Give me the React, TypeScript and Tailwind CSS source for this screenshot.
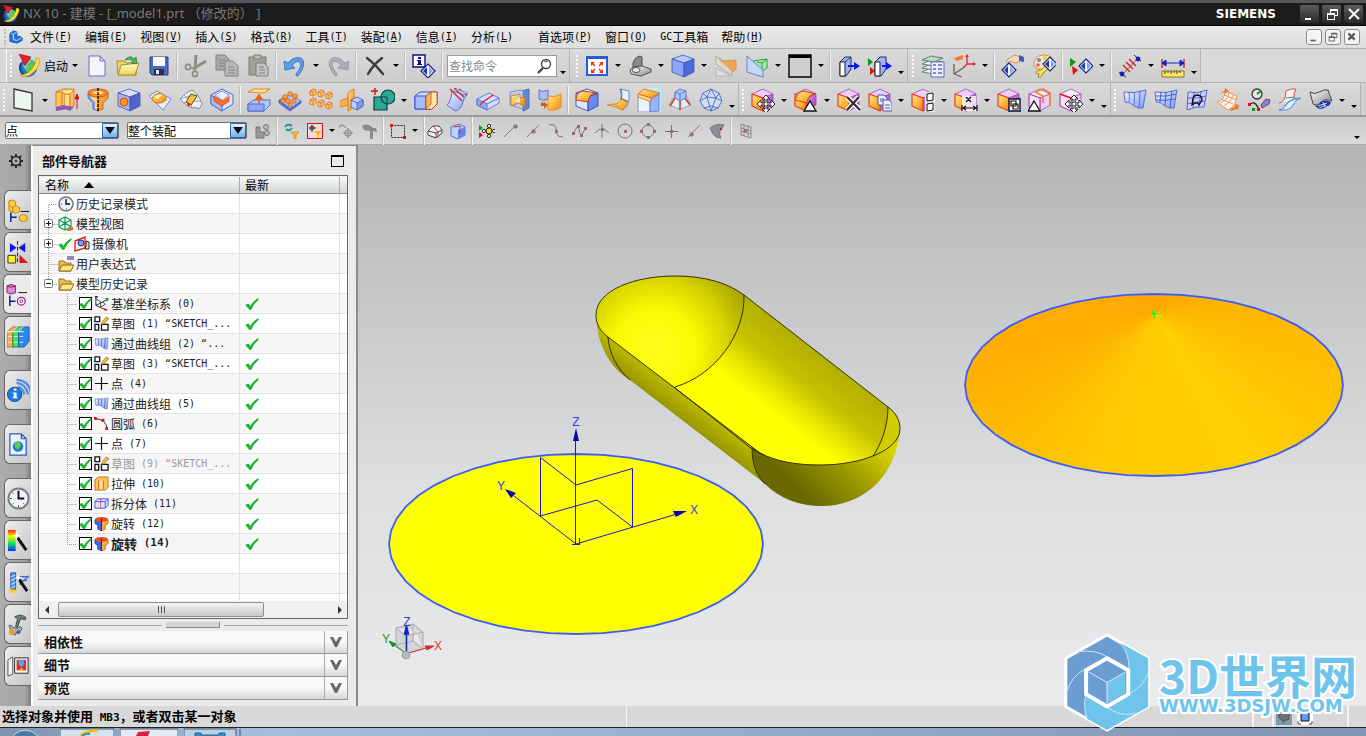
import React, { useState } from 'react';
import clsx from 'clsx';

type Art = Record<string, React.ReactNode>;

/* ---------- shared drawing pieces ---------- */

const Gradients = () => (
  <svg className="absolute h-0 w-0" aria-hidden="true">
    <defs>
      <linearGradient id="blue" x1="0" y1="0" x2="1" y2="1">
        <stop offset="0" stopColor="#f4f7ff" />
        <stop offset="1" stopColor="#7e9af4" />
      </linearGradient>
      <linearGradient id="orange" x1="0" y1="0" x2="1" y2="1">
        <stop offset="0" stopColor="#ffec9a" />
        <stop offset="0.6" stopColor="#ffb030" />
        <stop offset="1" stopColor="#f58418" />
      </linearGradient>
      <linearGradient id="yellow" x1="0" y1="0" x2="0" y2="1">
        <stop offset="0" stopColor="#fffbd0" />
        <stop offset="1" stopColor="#f2d35a" />
      </linearGradient>
      <linearGradient id="purple" x1="0" y1="0" x2="1" y2="1">
        <stop offset="0" stopColor="#d99aee" />
        <stop offset="1" stopColor="#9a34b8" />
      </linearGradient>
      <linearGradient id="gray" x1="0" y1="0" x2="1" y2="1">
        <stop offset="0" stopColor="#fafafa" />
        <stop offset="1" stopColor="#8b8b8b" />
      </linearGradient>
      <linearGradient id="rainbow" x1="0" y1="0" x2="0" y2="1">
        <stop offset="0" stopColor="#ff2200" />
        <stop offset="0.3" stopColor="#ffee00" />
        <stop offset="0.6" stopColor="#22ee44" />
        <stop offset="1" stopColor="#0033ff" />
      </linearGradient>
    </defs>
  </svg>
);

const Cube = ({ top, left, right, stroke }: { top: string; left: string; right: string; stroke: string }) => (
  <g stroke={stroke} strokeWidth=".8" strokeLinejoin="round">
    <path d="M1 5L12 1l11 4-10 4z" fill={top} />
    <path d="M1 5l12 4v14L1 18z" fill={left} />
    <path d="M13 9l10-4v13l-10 5z" fill={right} />
  </g>
);

const SyncCube = ({ faded }: { faded?: boolean }) => (
  <g strokeLinejoin="round" strokeWidth=".8">
    <path d="M1 6L12 1l10 5-10 4z" fill={faded ? '#fbeefc' : '#efcdf8'} stroke="#9a4ab4" />
    <path d="M12 10l10-4v11l-10 6z" fill={faded ? '#ecd0f4' : 'url(#purple)'} stroke="#9a4ab4" />
    <path d="M1 6l11 4v13L1 18z" fill={faded ? '#f8e0f6' : 'url(#orange)'} stroke={faded ? '#a050b8' : '#f03a10'} strokeWidth="1.2" />
  </g>
);

const MoveCross = () => (
  <path
    d="M15 7l4 4h-3v4h4v-3l4 4-4 4v-3h-4v4h3l-4 4-4-4h3v-4h-4v3l-4-4 4-4v3h4v-4h-3z"
    fill="#fff"
    stroke="#222"
    strokeWidth="1"
  />
);

const Diamond = ({ x, y }: { x: number; y: number }) => (
  <g transform={`translate(${x} ${y})`}>
    <path d="M0-7l7 7-7 7-7-7z" fill="#f2f5ff" stroke="#1a2280" strokeWidth="1.2" />
    <path d="M-1-4v8l-4-4z" fill="#1a35b4" />
    <path d="M1-4l4 4-4 4z" fill="#8aa4f4" />
  </g>
);

const Triangle2 = () => (
  <>
    <path d="M1 4l6 4-6 5z" fill="#0a9a1a" />
    <path d="M3 12l6 4-5 5z" fill="#dd1111" />
  </>
);

const LogoArt = () => (
  <>
    <circle cx="11" cy="14" r="9" fill="#1878d0" />
    <path d="M9 6q7-1 9 4 1 5-4 8-6 1-7-5z" fill="#58c860" />
    <path d="M4 9q-3 8 4 13" fill="none" stroke="#12409c" strokeWidth="2" />
    <path d="M6 12q2-5 8-6-4 3-5 8z" fill="#a8e4f0" />
    <path d="M19 4q4 0 4 3-2 9-10 14-7 3-10 0 7 0 12-6 4-5 4-11z" fill="#ffdc3c" stroke="#c08a08" strokeWidth=".6" />
    <path d="M2 0l12 3-6 9z" fill="#e3202a" stroke="#a01018" strokeWidth=".6" />
  </>
);

/* ---------- 24px toolbar drawings ---------- */

const art: Art = {
  logo: <LogoArt />,
  new: <path d="M4 2h11l5 5v15H4zM15 2v5h5" fill="#f3f5ff" stroke="#6a6fd0" />,
  open: (
    <>
      <path d="M1 7h7l2 2h10v12H2z" fill="#ecd468" stroke="#a8922a" />
      <path d="M5 11l18-2-4 12H2z" fill="url(#yellow)" stroke="#a8922a" />
      <path d="M9 6q5-6 9-1l2-2 1 7-6-1 2-2q-3-3-8-1z" fill="#4ab45a" stroke="#1a6a28" strokeWidth=".6" />
    </>
  ),
  save: (
    <>
      <path d="M3 3h18v18H5l-2-2z" fill="#4a6ac8" stroke="#2c3c76" />
      <path d="M6 3h12v9H6z" fill="#f8fafd" />
      <path d="M7 15h10v6H7z" fill="#2a2f3c" />
      <path d="M9 16h3v4H9z" fill="#e8e8e8" />
    </>
  ),
  cut: (
    <g stroke="#8e8e84" fill="none" strokeWidth="1.6">
      <path d="M12 1l-1 14M22 7L9 15" strokeWidth="3" />
      <circle cx="4" cy="13" r="2.6" />
      <circle cx="11" cy="20" r="2.6" />
      <path d="M6 14l5 1v3" />
    </g>
  ),
  copy: (
    <g fill="#a9a9a9" stroke="#828282">
      <path d="M1 1h9l4 4v11H1z" />
      <path d="M10 7h8l5 5v10H10z" fill="#b8b8b8" />
      <path d="M4 6h6M4 9h5M4 12h5M13 13h6M13 16h7M13 19h7" />
    </g>
  ),
  paste: (
    <g fill="#a2a298" stroke="#7e7e7a">
      <path d="M3 3h17v18H3z" />
      <path d="M8 1h7v4H8z" fill="#bbb" />
      <path d="M10 9h8l4 4v9H10z" fill="#c4c4c8" />
      <path d="M13 13h5M13 16h6M13 19h6" />
    </g>
  ),
  undo: <path d="M5 9q6-7 13-5 7 5-3 18-3 0-2-2 7-9 4-12-3-2-8 3l3 3-10 2-1-9z" fill="#5a9eea" stroke="#2a6abc" strokeWidth=".8" />,
  redo: <path d="M19 9Q13 2 6 4q-7 5 3 18 3 0 2-2-7-9-4-12 3-2 8 3l-3 3 10 2 1-9z" fill="#a8afb6" stroke="#8e959c" strokeWidth=".8" />,
  delete: <path d="M4 4q8 6 16 16M19 4Q10 11 5 20" fill="none" stroke="#3c3c3c" strokeWidth="2.4" strokeLinecap="round" />,
  info: (
    <>
      <path d="M1 1h12v12H1z" fill="#fff" stroke="#0a0a90" strokeWidth="1.4" />
      <path d="M6 3h3v2H6zM5 6h4v4h1v1H5v-1h1V7H5z" fill="#0a0a90" />
      <Diamond x={16} y={17} />
    </>
  ),
  fit: (
    <>
      <path d="M2 3h20v18H2z" fill="#fff" stroke="#2a5ad8" strokeWidth="2" />
      <path d="M2 2h20v3H2z" fill="#2a5ad8" />
      <path d="M6 8h4l-4 4zM18 8h-4l4 4zM6 19h4l-4-4zM18 19h-4l4-4z" fill="#ee3311" />
      <path d="M7 9l3 3M17 9l-3 3M7 18l3-3M17 18l-3-3" stroke="#ee3311" strokeWidth="1.5" />
    </>
  ),
  hinge: (
    <g stroke="#444" strokeWidth=".9">
      <path d="M5 14V9q2-6 7-7l2 1v9l-7 6z" fill="#8a8a8a" />
      <path d="M2 16l3-3 9-1 9 3v3l-10 4-10-2z" fill="url(#gray)" />
      <ellipse cx="8" cy="16" rx="4" ry="2.5" fill="#e8e8e8" />
    </g>
  ),
  shaded: <Cube top="#b9c8fc" left="#8ea4f6" right="#4f68dc" stroke="#3c54bc" />,
  section: (
    <>
      <path d="M5 4l4 3 13-1v9l-5 4L5 8z" fill="#f0a850" stroke="#d09858" />
      <path d="M2 2l16 15v5L2 10z" fill="#e2ddd2" fillOpacity=".8" stroke="#b4ac9c" />
      <path d="M2 14l15 8H2z" fill="#dedede" stroke="#b8b8b8" />
    </>
  ),
  clip: (
    <>
      <path d="M8 7l14-2v9l-6 4z" fill="#a6ecb0" stroke="#2e9a48" />
      <path d="M12 8l5 1v8M17 9l5-4" fill="none" stroke="#2e9a48" />
      <path d="M2 2l16 14v7L2 18z" fill="#c4d8fc" fillOpacity=".9" stroke="#6a86c4" />
    </>
  ),
  background: (
    <>
      <path d="M1 1h22v22H1z" fill="#cfcfcf" stroke="#000" strokeWidth="1.4" />
      <path d="M1 1h22v3H1z" fill="#000" />
    </>
  ),
  face: (
    <>
      <path d="M3 8l5-5h6v12l-5 7H3z" fill="#9fb4f4" stroke="#222a66" />
      <path d="M3 8h5v14H3z" fill="#fff" stroke="#222" />
      <path d="M8 8l6-5" stroke="#222a66" />
      <path d="M11 11h6V8l6 4-6 4v-3h-6z" fill="#0a1ae0" />
    </>
  ),
  faceCmp: (
    <>
      <path d="M0 4l5 4-5 4z" fill="#0a9a1a" />
      <path d="M2 13l5 4-5 4z" fill="#dd1111" />
      <path d="M7 8l5-5h6v12l-5 7H7z" fill="#9fb4f4" stroke="#222a66" />
      <path d="M7 8h5v14H7z" fill="#fff" stroke="#222" />
      <path d="M14 11h4V8l6 4-6 4v-3h-4z" fill="#0a1ae0" />
    </>
  ),
  layers: (
    <>
      <g fill="#eef4ef" stroke="#5c7864" strokeWidth=".9">
        <path d="M1 18l9-4 12 2-9 4z" />
        <path d="M1 14l9-4 12 2-9 4z" />
        <path d="M1 10l9-4 12 2-9 4z" />
        <path d="M1 6l9-4 12 2-9 4z" fill="#b8dcc0" />
      </g>
      <path d="M10 8h13v15H10z" fill="#eef2ff" stroke="#5a6ad0" />
      <path d="M12 11h3M12 15h3M12 19h3M17 11h4M17 15h4M17 19h4" stroke="#5a6ad0" strokeWidth="1.6" />
    </>
  ),
  csys: (
    <>
      <path d="M2 4l9-3v4l-6 2z" fill="#f07a30" />
      <path d="M15 2v8h8M15 10l-4 4" fill="none" stroke="#dd2a2a" strokeWidth="1.3" />
      <path d="M2 10v10M2 20l9-6M2 20l8 3" fill="none" stroke="#666" strokeWidth="1.3" />
      <path d="M15 0l-2 3h4zM24 10l-3-2v4z" fill="#dd2a2a" />
    </>
  ),
  edit: (
    <>
      <path d="M8 4l6-3 5 2v4l-4 2-7-2-1 3-2-3z" fill="#f8dcb0" stroke="#b08a50" strokeWidth=".8" />
      <path d="M18 1l5 2v5l-5-1z" fill="#3a5ac8" />
      <Diamond x={8} y={16} />
    </>
  ),
  palette: (
    <>
      <path d="M2 8Q5 0 14 1q8 2 7 9-3 4-8 3-3 4-9 1-3-2-2-6z" fill="#fce2b4" stroke="#b89058" />
      <circle cx="7" cy="6" r="2" fill="#4a90e8" />
      <circle cx="13" cy="4" r="2" fill="#f0d030" />
      <circle cx="6" cy="11" r="1.8" fill="#e86050" />
      <path d="M14 11l-5 5q-5 0-5 3l3 1-1 3q4 1 5-4l6-5z" fill="#f8dc60" stroke="#a88a20" />
      <Diamond x={18} y={10} />
    </>
  ),
  showHide: (
    <>
      <Triangle2 />
      <Diamond x={17} y={12} />
    </>
  ),
  measure: (
    <>
      <path d="M1 18l7 5M16 1l7 6" stroke="#333" />
      <path d="M5 20L20 4" stroke="#a02222" strokeWidth=".8" />
      <path d="M5 11l7 7M8 8l7 7M11 5l7 7" stroke="#cc2222" strokeWidth="1.4" />
      <circle cx="4" cy="20" r="2.4" fill="#1122bb" />
      <circle cx="20" cy="5" r="2.4" fill="#1122bb" />
    </>
  ),
  ruler: (
    <>
      <path d="M1 5v9M23 5v9" stroke="#cc2222" strokeWidth="1.4" />
      <path d="M1 9h22M1 9l4-3v6zM23 9l-4-3v6z" stroke="#1122bb" fill="#1122bb" />
      <path d="M1 17h22v6H1z" fill="#ffe96a" stroke="#8a7410" />
      <path d="M4 17v3M7 17v2M10 17v3M13 17v2M16 17v3M19 17v2" stroke="#333" />
    </>
  ),
  plane: <path d="M2 1l18 4v18L2 20z" fill="#edf6ee" stroke="#2c3a30" strokeWidth="1.3" />,
  extrude: (
    <>
      <path d="M1 4l7-3h11v16l-3 4H1z" fill="#ffc658" stroke="#d8601a" strokeWidth=".8" />
      <path d="M1 4h6l3 2h5l4-4" fill="#ffe9a8" stroke="#d8601a" strokeWidth=".8" />
      <path d="M7 4v16M10 6v15M15 6v15" stroke="#e0701a" />
      <path d="M10 7h4v13h-4z" fill="#ffe08a" />
      <path d="M1 19l7-2 11 2-4 4-5-2-3 1-6 1z" fill="#8a5ab8" />
      <path d="M22 21V9M20 11l2-5 2 5z" stroke="#dd1111" fill="#dd1111" />
    </>
  ),
  revolve: (
    <>
      <path d="M2 5v5l5 5v6l5 2V3z" fill="#7f9cf0" stroke="#4a60b0" strokeWidth=".8" />
      <path d="M5 6v4l4 4v7l3 2V7z" fill="#ffd878" />
      <path d="M22 5v5l-5 5v6l-5 2V3z" fill="#f9a032" stroke="#c05010" strokeWidth=".8" />
      <path d="M2 5q0-4 10-4t10 4q-2 4-10 4T2 5z" fill="#f88a20" stroke="#c84a10" strokeWidth=".8" />
      <path d="M6 5q2-2 6-2t6 2q-2 1-6 1T6 5z" fill="#ffe8a8" />
      <path d="M12 0v24" stroke="#111" strokeDasharray="3 1" strokeWidth="1.4" />
    </>
  ),
  hole: (
    <>
      <Cube top="#d6dfff" left="#a4b6fa" right="#4f64cc" stroke="#4256b8" />
      <circle cx="7" cy="14" r="4" fill="#ff9420" stroke="#d84a08" />
    </>
  ),
  emboss: (
    <>
      <path d="M1 8l8-5 14 8-8 11z" fill="#e6effc" stroke="#6a8ac8" />
      <path d="M4 10q4-6 9-4 6 2 5 6-4 4-9 3-5-1-5-5z" fill="url(#orange)" stroke="#d06a18" />
      <path d="M7 9q4-4 8-2-4 1-5 4z" fill="#fff2b0" />
    </>
  ),
  offset: (
    <>
      <path d="M1 11Q6 4 13 2q6 3 10 14l-3 5q-4-3-7-1-6-2-12-9z" fill="#eef2f6" stroke="#74849c" strokeWidth=".9" />
      <path d="M5 7q5 3 8 13M1 11q7-3 18-4M4 15q8-2 18-2" stroke="#8494ac" fill="none" strokeWidth=".8" />
      <path d="M12 6l6 2-6 9-5-3z" fill="#f8c838" stroke="#604808" />
      <path d="M8 14l4 2-3 3z" fill="#d01a10" />
    </>
  ),
  pocket: (
    <>
      <path d="M1 7l11-6 11 6v9l-11 7-11-7z" fill="#d6e2ff" stroke="#5068cc" />
      <path d="M1 7v9l11 7v-9z" fill="#aabcf8" stroke="#5068cc" />
      <path d="M5 7l7-4 7 4-7 5z" fill="#e8f0ff" stroke="#5068cc" strokeWidth=".6" />
      <path d="M4 8l8 5 7-5v5l-7 5-8-5z" fill="#f87030" stroke="#c84010" strokeWidth=".8" />
      <path d="M12 12l7-4" stroke="#ffd0a0" />
    </>
  ),
  thicken: (
    <>
      <path d="M1 4l6-3h16l-6 4z" fill="#ffe99a" stroke="#e8801a" />
      <path d="M1 16l6-4h16v5l-6 6H1z" fill="#b4c5ff" stroke="#4a62cc" strokeWidth=".9" />
      <path d="M1 16h16v7H1z" fill="#8fa8fa" stroke="#4a62cc" strokeWidth=".9" />
      <path d="M12 16v-6M9 11l3-4 3 4z" stroke="#f0641a" strokeWidth="1.6" fill="#f0641a" />
    </>
  ),
  bosses: (
    <>
      <path d="M1 12l11-5 11 6-11 8z" fill="#b4c5ff" stroke="#5a72cc" strokeWidth=".8" />
      <path d="M1 12v3l11 8 11-8v-2l-11 8z" fill="#5a76d8" stroke="#3a52c0" strokeWidth=".8" />
      <g fill="#fba23e" stroke="#b85810" strokeWidth=".7">
        <circle cx="7" cy="9" r="2.3" />
        <circle cx="12" cy="6" r="2.3" />
        <circle cx="17" cy="8" r="2.3" />
        <circle cx="5" cy="13" r="2.3" />
        <circle cx="10" cy="13" r="2.3" />
        <circle cx="16" cy="13" r="2.3" />
        <circle cx="12" cy="17" r="2" />
      </g>
    </>
  ),
  pattern: (
    <g fill="#ffd070" stroke="#e87a20">
      {[[1, 3], [9, 4], [17, 6], [1, 12], [9, 14], [17, 16]].map(([x, y]) => (
        <path key={`${x}-${y}`} d={`M${x} ${y}l3-2 3 1v4l-3 2-3-1zM${x} ${y}l3 1 3-2M${x + 3} ${y + 1}v4`} />
      ))}
    </g>
  ),
  mirror: (
    <>
      <path d="M0 13l8-3v7l-8 2z" fill="#ffb44a" stroke="#e08020" />
      <path d="M8 5l6-4v18l-6 4z" fill="url(#orange)" stroke="#e07a18" />
      <path d="M11 12l6-3 6 3v6l-6 4-6-3z" fill="#c0d0ff" stroke="#4a62c8" strokeWidth=".9" />
      <path d="M17 15l6-3v6l-6 4z" fill="#7f9af0" stroke="#4a62c8" strokeWidth=".9" />
      <path d="M11 12l6 3" stroke="#4a62c8" />
    </>
  ),
  unite: (
    <>
      <path d="M3 9h13v13H3z" fill="#2aa89a" stroke="#0d3d36" strokeWidth="1.2" />
      <circle cx="17" cy="9" r="7" fill="#2aa89a" stroke="#0d3d36" strokeWidth="1.2" />
      <path d="M10 9h6v6" fill="none" stroke="#0d3d36" />
      <path d="M4 0v7M0 3h7" stroke="#dd1111" strokeWidth="1.4" />
    </>
  ),
  shell: (
    <>
      <path d="M1 8l5-4h17v12l-5 5H1z" fill="#cfdaff" stroke="#3a4ad8" />
      <path d="M1 8h11v13H1z" fill="#a8baff" stroke="#3a4ad8" />
      <path d="M12 8l5-4h6v12l-5 5h-6z" fill="#f8e8a8" stroke="#dd1111" strokeDasharray="2 1" />
      <path d="M12 8l5-4v12l-5 5z" fill="#f0b860" stroke="#b85a20" strokeWidth=".8" />
    </>
  ),
  trim: (
    <>
      <path d="M7 3l15 4q-3 2-4 7-2 8-8 9l-8-6q4-3 5-14z" fill="url(#blue)" stroke="#5a70d0" />
      <path d="M5 1l12 12M9 0l10 9M14 1l8 6" stroke="#dd2222" strokeWidth="1.4" />
      <path d="M9 0l14 5-5 2z" fill="#ccd8ff" fillOpacity=".7" stroke="#5a70d0" strokeWidth=".6" />
    </>
  ),
  split: (
    <>
      <path d="M1 11l12-6 10 5v5l-12 7-10-5z" fill="#d3deff" stroke="#5570d4" strokeWidth=".9" />
      <path d="M1 11l10 5v6l-10-5z" fill="#94acf8" stroke="#5570d4" strokeWidth=".9" />
      <path d="M11 16l12-6" stroke="#5570d4" />
      <path d="M4 17l3-3 10-7" stroke="#dd2222" strokeWidth="1.4" fill="none" />
    </>
  ),
  sew: (
    <>
      <path d="M14 3l8-2v19l-6 3z" fill="#5f8ad8" stroke="#3c5aac" strokeWidth=".8" />
      <path d="M3 4l10-2 3 1v18l-13-4z" fill="#b9cff0" stroke="#7688b0" strokeWidth=".8" />
      <path d="M4 8l9-2v4l5-1v10l-6-4-8 3z" fill="url(#orange)" stroke="#c86a20" strokeWidth=".8" />
      <path d="M7 13l6-4v6z" fill="#d8e4f8" />
    </>
  ),
  wrap: (
    <>
      <path d="M1 2q4 3 9 0v9q-5 3-9 0z" fill="#a9bcf4" stroke="#6078c8" />
      <path d="M10 8q6 2 13-2v13q-5 4-13 3z" fill="url(#orange)" stroke="#e0902a" />
      <path d="M3 14v4h3v3l4-4-4-3v1z" fill="#d85a1a" />
    </>
  ),
  blend: (
    <>
      <Cube top="#eef2ff" left="#dfe8ff" right="#6c88ec" stroke="#2a3cc0" />
      <path d="M1 12Q1 4 8 3l14 2q-8 0-9 9z" fill="url(#orange)" stroke="#d03a10" />
    </>
  ),
  faceBlend: (
    <>
      <path d="M14 1l9 2v9q0 6-6 10l-3-3q3-6 0-18z" fill="#e8f0fb" stroke="#4a78b8" strokeWidth=".8" />
      <path d="M1 17l7-1 8 1 1 5q-8-4-16-5z" fill="#ffb84a" stroke="#d8801a" strokeWidth=".8" />
      <path d="M9 16q6-1 6-6l7 3q-1 6-6 9z" fill="url(#orange)" stroke="#d8801a" strokeWidth=".8" />
      <path d="M15 1q2 6 0 10l7 3" fill="none" stroke="#3a78c8" />
    </>
  ),
  chamfer: (
    <>
      <path d="M8 0h16v24H8z" fill="#b4f0fb" />
      <path d="M1 8l12 4v12H1z" fill="#eef2ff" stroke="#6a80d0" strokeWidth=".8" />
      <path d="M13 12l9-6v17l-9 1z" fill="#9ab2f8" stroke="#5a74cc" strokeWidth=".8" />
      <path d="M7 1l16 4-9 5L1 6z" fill="url(#orange)" stroke="#dd5a18" strokeWidth=".8" />
      <path d="M1 6l13 4v4L1 9z" fill="#ffe08a" stroke="#dd5a18" strokeWidth=".8" />
    </>
  ),
  draft: (
    <>
      <path d="M1 17L8 5h9l6 12-11 4z" fill="#e6edfa" stroke="#8094b4" strokeWidth=".8" />
      <path d="M7 4l5-3 6 2v7l-6 3-5-3z" fill="#aac4ff" stroke="#4a68c0" strokeWidth=".8" />
      <path d="M7 4l5 2 6-3M12 6v7" fill="none" stroke="#4a68c0" strokeWidth=".8" />
      <path d="M7 10L2 18M12 13v9M17 10l5 7" stroke="#dd3311" strokeWidth="1.5" />
    </>
  ),
  sphere: (
    <g fill="#d0def8" stroke="#4a68b0" strokeWidth=".9">
      <path d="M12 1l8 4 3 8-4 7-7 3-7-3-4-7 3-8z" />
      <path d="M12 1L8 9l4 14 5-13zM1 13l7-4 9 1 6 3M4 5l4 4M20 5l-3 5M5 20l7-2 7 2" fill="none" />
    </g>
  ),
  moveFace: (
    <>
      <SyncCube />
      <MoveCross />
    </>
  ),
  resizeFace: (
    <>
      <SyncCube />
      <path d="M1 12Q4 3 10 3l12 3q-8 0-9 9z" fill="url(#orange)" stroke="#dd3a10" />
      <path d="M16 13l6 10H10z" fill="#fff" stroke="#111" strokeWidth="1.4" />
    </>
  ),
  deleteFace: (
    <>
      <SyncCube />
      <path d="M10 9l13 13M22 9L10 22" stroke="#fff" strokeWidth="5" />
      <path d="M10 9l13 13M22 9L10 22" stroke="#333" strokeWidth="2.4" />
    </>
  ),
  copyFace: (
    <>
      <SyncCube />
      <g fill="#eaf0ff" stroke="#4a5e9c">
        <path d="M10 7h6l3 3v7h-9z" />
        <path d="M15 12h6l3 3v8h-9z" />
        <path d="M12 11h4M12 13h3M17 17h5M17 20h5" />
      </g>
    </>
  ),
  coplanar: (
    <>
      <SyncCube />
      <path d="M14 4h10v20H14z" fill="#e4e4e4" />
      <path d="M16 6l6-1v7l-6 1zM16 16l6-1v7l-6 1z" fill="#fff" stroke="#111" />
    </>
  ),
  linear: (
    <>
      <SyncCube />
      <path d="M8 8h14v15H8z" fill="#fff" fillOpacity=".8" />
      <path d="M12 9l5 5M17 9l-5 5M8 17v6M23 17v6M9 20h13M12 18l-3 2 3 2M19 18l3 2-3 2" stroke="#111" strokeWidth="1.2" fill="none" />
    </>
  ),
  group: (
    <>
      <SyncCube />
      <path d="M12 11h11v12H12z" fill="#fff" stroke="#111" strokeWidth="1.4" />
      <path d="M14 13h5v5h-5zM16 16h5v5h-5z" fill="none" stroke="#111" strokeWidth="1.2" />
      <path d="M11 10h2v2h-2zM22 10h2v2h-2zM11 22h2v2h-2zM22 22h2v2h-2z" fill="#1a2ae0" />
    </>
  ),
  shellFace: (
    <>
      <SyncCube faded />
      <path d="M7 4l8-3 7 4v13M7 4l8 4v7" fill="none" stroke="#f48030" strokeWidth="1.8" />
      <path d="M6 13l6 10H0z" fill="#fff" stroke="#111" strokeWidth="1.3" />
    </>
  ),
  moveEdge: (
    <>
      <SyncCube faded />
      <path d="M1 6l11 4" stroke="#ee2211" strokeWidth="1.6" />
      <MoveCross />
    </>
  ),
  loft: (
    <>
      <path d="M1 4q11 2 22-2l-3 18q-5 1-9-2-3-4-9-4z" fill="url(#blue)" stroke="#4a66cc" strokeWidth=".9" />
      <path d="M6 4q1 4 0 10M11 4q1 5 0 13M17 3l-1 17" stroke="#4a66cc" fill="none" strokeWidth=".9" />
    </>
  ),
  mesh: (
    <>
      <path d="M1 4q11 2 22-2l-3 18q-5 1-9-2-3-4-9-4z" fill="url(#blue)" stroke="#4a66cc" strokeWidth=".9" />
      <path d="M7 4l-1 10M12 4l-1 13M18 3l-2 17M2 8q11 1 20-2M2 12q9 1 19-1" stroke="#3856bc" fill="none" strokeWidth=".9" />
    </>
  ),
  studio: (
    <>
      <path d="M3 4q10 2 19-2l-3 17q-8-1-17 3z" fill="#c8d2fc" stroke="#4a56dc" strokeWidth=".9" />
      <path d="M9 4L8 20M16 3l-2 16M2 10q9 1 19-2M2 16q9-2 18-3" stroke="#4a56dc" fill="none" strokeWidth=".9" />
      <path d="M7 17l1-7q1-3 5-3 4 1 4 5l-3 5-1-2h-3z" fill="none" stroke="#111" strokeWidth="1.3" />
    </>
  ),
  sweep: (
    <>
      <path d="M1 14Q9 12 9 3l12 5q-1 10-9 14z" fill="#fcf4ec" stroke="#e88a50" strokeWidth=".9" />
      <path d="M4 15q8-3 9-10M8 18q7-4 9-11M5 11l12 5M8 7l13 5" fill="none" stroke="#e88a50" strokeWidth=".9" />
      <path d="M4 6l5-4V0l4 3-4 3V4z" fill="#f07a24" />
      <path d="M14 21l5-2v-3l4 1-1 5-2-1-5 2z" fill="#f07a24" />
    </>
  ),
  section2: (
    <>
      <circle cx="10" cy="6" r="5" fill="#e6e6e6" stroke="#333" strokeWidth="1.3" />
      <path d="M10 6l4-3" stroke="#0a9a1a" strokeWidth="2" />
      <path d="M2 17q6-6 10 5" fill="none" stroke="#333" strokeWidth="1.4" />
      <path d="M1 15h3v3H1zM10 20h3v3h-3z" fill="#dd1111" />
      <path d="M5 20h3v3H5z" fill="#0a9a1a" />
      <path d="M14 17l5-6 4 1-1 4-7 4z" fill="#7488ec" stroke="#a83a3a" />
    </>
  ),
  nsided: (
    <>
      <path d="M1 15Q8 14 8 3q6-3 10-2-3 4-2 12" fill="#fcf0f0" stroke="#e04a4a" />
      <path d="M1 22q6-1 9-8 6-5 13-4-6 2-9 9-5 4-13 3z" fill="#d6f4fa" stroke="#4a8ad8" />
      <path d="M6 18q7-7 15-7" stroke="#4a8ad8" fill="none" strokeWidth=".8" />
      <path d="M8 10l8-1" stroke="#28a050" />
    </>
  ),
  drape: (
    <>
      <path d="M1 4q5 3 9 0 6-3 9-2l4 11q-7-3-11 1-4 5-8 2z" fill="url(#gray)" stroke="#444" />
      <path d="M6 18q4 0 6-4 5-3 10 0-1 4-4 4-3 3-8 3z" fill="#1c34b4" />
      <path d="M9 18l9-3M10 20l7-3M14 14l2 5" stroke="#fff" strokeWidth=".8" />
    </>
  ),
};

/* ---------- 16px drawings: selection bar and navigator ---------- */

const dim = '#8a7a7a';

const smallArt: Art = {
  interpart: (
    <g fill="#9a9a94" stroke="#77776f">
      <path d="M1 4h4v5h4v6H1z" />
      <circle cx="11" cy="4" r="2.5" fill="#bbb" />
      <circle cx="12" cy="10" r="2.5" fill="#bbb" />
    </g>
  ),
  filterReset: (
    <>
      <path d="M1 4q3-4 7-1M8 5Q5 9 2 6" fill="none" stroke="#139a9a" strokeWidth="2" />
      <path d="M7 9h8l-3 3v4l-2-1v-3z" fill="#ffb820" stroke="#c07a00" strokeWidth=".6" />
    </>
  ),
  filterOn: (
    <>
      <path d="M.5.5h15v15H.5z" fill="#f3dada" stroke="#cc1111" />
      <path d="M5 2v7M2 5h7" stroke="#333" />
      <circle cx="5" cy="5" r="2" fill="none" stroke="#333" />
      <path d="M7 8h8l-3 3v4l-2-1v-3z" fill="#ffb820" />
    </>
  ),
  crossUndo: (
    <g fill="none" stroke="#8b8b8b" strokeWidth="1.2">
      <path d="M1 4q4-4 7 1" />
      <circle cx="10" cy="10" r="3" />
      <path d="M10 5v10M5 10h10" />
    </g>
  ),
  hammer: <path d="M1 3q6-4 11 2h3l1 4-4-1v8H9V8L3 7z" fill="#8b8b8b" />,
  marquee: (
    <>
      <path d="M1.500 2.500h13v12h-13z" fill="none" stroke="#222" strokeDasharray="2 1" />
      <path d="M0 1h3v3H0zM13 13h3v3h-3z" fill="#dd1111" />
    </>
  ),
  seed: (
    <>
      <path d="M1 8l5-5h6l3 4v3l-6 5-8-3z" fill="#f4f4f4" stroke="#444" />
      <path d="M1 8l8 2 6-3M9 10v5" stroke="#444" fill="none" />
      <path d="M6 3l5 6v5" stroke="#dd2222" fill="none" />
    </>
  ),
  cubeSel: (
    <>
      <path d="M1 4l8-3 6 3v8l-7 4-7-3z" fill="#b9d2ff" stroke="#4a76cc" />
      <path d="M8 7l7-3v8l-7 4z" fill="#5a88ec" />
      <path d="M4 4l6-1v8" fill="none" stroke="#dd3030" />
    </>
  ),
  snap: (
    <>
      <path d="M0 2l4 3-4 3z" fill="#0a9a1a" />
      <path d="M0 9l4 3-4 3z" fill="#dd1111" />
      <circle cx="10" cy="8" r="3" fill="#ffd820" stroke="#222" />
      <g fill="#fff" stroke="#222">
        <circle cx="10" cy="3" r="1.600" />
        <circle cx="10" cy="13" r="1.600" />
        <circle cx="5" cy="8" r="1.600" />
        <circle cx="15" cy="8" r="1.600" />
      </g>
    </>
  ),
  endpoint: <path d="M2 14L13 3M12 2h3v3h-3z" stroke={dim} fill={dim} />,
  midpoint: <path d="M2 14L14 2M7 7h3v3H7z" stroke={dim} fill={dim} />,
  control: (
    <>
      <path d="M1 2q8-2 7 6 0 6 7 6" fill="none" stroke="#777" />
      <path d="M7 7h3v3H7z" fill="#9c6a6a" />
    </>
  ),
  pole: (
    <>
      <path d="M2 10l5-7 3 10 4-7" fill="none" stroke="#777" />
      <path d="M1 9h3v3H1zM6 2h3v3H6zM9 11h3v3H9zM13 4h3v3h-3z" fill="#9c6a6a" />
    </>
  ),
  intersect: (
    <>
      <path d="M1 10q7-8 14 0M8 1v14" fill="none" stroke="#777" />
      <path d="M7 5h3v3H7z" fill="#9c6a6a" />
    </>
  ),
  center: (
    <>
      <circle cx="8" cy="8" r="7" fill="none" stroke="#777" />
      <path d="M7 7h3v3H7z" fill="#9c6a6a" />
    </>
  ),
  quadrant: (
    <>
      <circle cx="8" cy="8" r="6" fill="none" stroke="#777" />
      <path d="M7 0h3v3H7zM7 13h3v3H7zM0 7h3v3H0zM13 7h3v3h-3z" fill="#9c6a6a" />
    </>
  ),
  existing: (
    <>
      <path d="M8.500 2v13M2 8.500h13" stroke="#777" />
      <path d="M7 7h3v3H7z" fill="#9c6a6a" />
    </>
  ),
  onCurve: <path d="M2 14L14 2M4 10h3v3H4z" stroke={dim} fill="#9c6a6a" />,
  onFace: (
    <>
      <path d="M1 5q6-5 14-3l-4 6q-1 4 1 7-6 0-8-4z" fill="#8a8f94" stroke="#74787c" />
      <path d="M11 5h2v2h-2z" fill="#a03a3a" />
    </>
  ),
  gridSnap: (
    <g fill="none" stroke="#888">
      <path d="M3 1l10 3v11L3 12zM6 2v11M10 3v11M3 5l10 3M3 8l10 3" />
      <path d="M6 6h3v3H6z" fill="#9c6a6a" stroke="none" />
    </g>
  ),
  history: (
    <>
      <circle cx="8" cy="8" r="7" fill="#e9f2fb" stroke="#777" strokeWidth="1.600" />
      <path d="M8 3v5h4" fill="none" stroke="#111" strokeWidth="1.400" />
      <path d="M8 13h1M3 8h1" stroke="#333" />
    </>
  ),
  view: (
    <>
      <path d="M1 4l6-3 6 3v7l-6 3-6-3zM1 4l6 3 6-3M7 1v13M1 11l6-4 6 4" fill="none" stroke="#189a52" strokeWidth="1.200" />
      <path d="M8 14l7-3v3l-4 1z" fill="#f05a20" />
    </>
  ),
  camera: (
    <>
      <path d="M1 5l10-4v11L1 15z" fill="#f4f4ff" stroke="#dd2a10" strokeWidth="1.400" />
      <circle cx="7" cy="7" r="3" fill="#8a9af0" stroke="#1a2a9a" />
      <path d="M12 5l3 1v7h-4l1-3z" fill="#ddd" stroke="#222" />
    </>
  ),
  expression: (
    <>
      <path d="M9 1h7M9 3h7" stroke="#1a1a8a" />
      <path d="M1 5h5l1 2h6v8H1z" fill="#ecc04c" stroke="#9a7420" />
      <path d="M4 9h12l-3 6H1z" fill="#ffe48a" stroke="#8a6410" />
    </>
  ),
  folder: (
    <>
      <path d="M1 3h5l1 2h6v9H1z" fill="#ecc04c" stroke="#9a7420" />
      <path d="M4 8h12l-3 6H1z" fill="#ffe48a" stroke="#8a6410" />
    </>
  ),
  datum: (
    <>
      <path d="M2 1v9l11 5M2 10l12-6" fill="none" stroke="#222" />
      <path d="M2 3l5 3v6l5-3-3-3" fill="none" stroke="#444" />
      <path d="M12 2h4l-2 4z" fill="#0a9a1a" />
      <path d="M10 13l5 1-3 2z" fill="#dd1111" />
      <path d="M1 0h3v2H1z" fill="#1a2ae0" />
    </>
  ),
  sketch: (
    <>
      <path d="M1 1h5v5H1zM1 9h4v6H1zM8 9h7v6H8z" fill="#fff" stroke="#111" strokeWidth="1.400" />
      <path d="M8 9l1-3 4-5 3 2-5 5z" fill="#f8b838" stroke="#8a5a10" strokeWidth=".6" />
    </>
  ),
  loft: (
    <>
      <path d="M1 3q7 1 14-1l-1 12q-3 0-6-3-2-2-6-1z" fill="url(#blue)" stroke="#6a80d8" strokeWidth=".8" />
      <path d="M5 3v7M8 3v8M12 3l-1 10" stroke="#5a70d0" />
    </>
  ),
  point: <path d="M8 1v14M1 8h14" stroke="#111" strokeWidth="1.300" />,
  arc: (
    <>
      <path d="M1 3q12 0 13 11" fill="none" stroke="#222" />
      <path d="M0 1h3v3H0zM8 3h3v3H8zM12 12h3v3h-3z" fill="#dd1111" />
    </>
  ),
  extrude: (
    <>
      <path d="M1 4l4-3h10v11l-3 3H1z" fill="#ffc658" stroke="#d8601a" />
      <path d="M5 4v10M10 5v9" stroke="#d8601a" />
      <path d="M6 5h3v9H6z" fill="#ffe8a0" />
    </>
  ),
  split: (
    <>
      <path d="M1 6l3-3h11v7l-3 3H1z" fill="#dbe2ff" stroke="#4a50e0" />
      <path d="M1 6h11v7M12 6l3-3" fill="none" stroke="#4a50e0" />
      <path d="M7 3v10" stroke="#dd1a3a" strokeDasharray="2 1" />
    </>
  ),
  revolve: (
    <>
      <path d="M1 4v4l3 2v4l4 2V4z" fill="#3a6ae0" stroke="#223a90" strokeWidth=".8" />
      <path d="M15 4v4l-3 2v4l-4 2V4z" fill="#fcae3a" stroke="#b84a10" strokeWidth=".8" />
      <path d="M1 4q0-3 7-3t7 3q-1 2-7 2T1 4z" fill="#ee4a20" />
      <path d="M8 3v13" stroke="#111" strokeDasharray="2 1" />
    </>
  ),
  tick: <path d="M1 9l3-1 2 3q4-7 9-9v1Q9 8 7 14H5z" fill="#12c030" stroke="#0ea828" />,
};

/* ---------- resource bar drawings ---------- */

const railArt: Art = {
  assembly: (
    <>
      <path d="M2 2l4-1 3 2v4l4 2v4l-4 2-7-3z" fill="#ffcc40" stroke="#c0840a" />
      <path d="M2 7l4 2 3-2M6 9v5" fill="none" stroke="#c0840a" />
      <path d="M14 13h9" stroke="#111" />
      <path d="M4 14v10M4 19h6" stroke="#0a1a9a" strokeWidth="1.500" />
      <path d="M13 18l4-2 4 2v4l-4 2-4-2z" fill="#ffcc40" stroke="#c0840a" />
    </>
  ),
  constraint: (
    <>
      <path d="M3 2l7 5-7 5zM19 2l-7 5 7 5z" fill="#0f18e0" />
      <path d="M11 0v24" stroke="#222" strokeDasharray="4 2" />
      <path d="M1 15h8v8H1z" fill="#fff21a" stroke="#333" />
      <path d="M13 14l9 9h-9z" fill="#dd1414" />
    </>
  ),
  part: (
    <>
      <path d="M1 3q4-3 9 0v7q-5 3-9 0z" fill="#dc8ccc" stroke="#8a1a7a" />
      <path d="M1 3q4 3 9 0" fill="none" stroke="#8a1a7a" />
      <path d="M13 10h9" stroke="#111" />
      <path d="M4 13v11M4 19h6" stroke="#0a1a9a" strokeWidth="1.500" />
      <circle cx="16" cy="19" r="4" fill="#fff" stroke="#a01a80" strokeWidth="1.300" />
      <circle cx="16" cy="19" r="1.500" fill="none" stroke="#a01a80" />
    </>
  ),
  library: (
    <>
      <path d="M0 7l6-5h5v15l-5 6H0z" fill="#f5ac50" stroke="#b0640a" strokeWidth=".8" />
      <path d="M6 7l6-5h5v15l-5 6H6z" fill="#3ae06a" stroke="#0a7a2a" strokeWidth=".8" />
      <path d="M12 7l6-5h5v15l-5 6h-6z" fill="#2a8ae8" stroke="#0a4a9a" strokeWidth=".8" />
      <path d="M0 7h6l5-5M6 7h6l5-5M12 7h6" fill="none" stroke="#fff" />
      <path d="M1 12h4M7 12h4M13 12h4M1 18h4M7 18h4M13 18h4" stroke="#fff" strokeWidth=".8" />
    </>
  ),
  hd3d: (
    <>
      <path d="M11 8q6 1 7 8M10 4q10 1 12 12M10 1q12 0 15 13" fill="none" stroke="#4a8ae4" strokeWidth="2.200" />
      <circle cx="8" cy="16" r="7.500" fill="#1a7ae0" stroke="#0a4a9a" />
      <path d="M7 10h3v2H7zM6 14h4v5h1v1H6v-1h1v-4H6z" fill="#fff" />
    </>
  ),
  web: (
    <>
      <path d="M3 1h12l5 5v17H3zM15 1v5h5" fill="#eaf3ff" stroke="#2a5ac0" strokeWidth="1.300" />
      <circle cx="11.500" cy="14" r="5.500" fill="#2a78d0" />
      <path d="M8 11q4-3 6 0 1 4-3 6-4-2-3-6z" fill="#5ad04a" />
    </>
  ),
  clock: (
    <>
      <circle cx="12" cy="12" r="10.500" fill="#edf4fa" stroke="#7c7c7c" strokeWidth="2" />
      <path d="M12 4v8h6" fill="none" stroke="#111" strokeWidth="2" />
      <path d="M12 19v2M3 12h2M6 6l1 1M18 18l-1-1M6 18l1-1" stroke="#333" />
    </>
  ),
  materials: (
    <>
      <path d="M1 1h8v22H1z" fill="url(#rainbow)" />
      <path d="M11 9l9 13" stroke="#111" strokeWidth="3" />
      <path d="M10 2l1 4 4 1-4 1-1 4-1-4-4-1 4-1z" fill="#fff" />
    </>
  ),
  wizard: (
    <>
      <path d="M4 2h5v17H4z" fill="#5a9ae8" stroke="#1a4aa8" />
      <path d="M4 6l5-2M4 10l5-2M4 14l5-2M4 18l5-2" stroke="#cfe4ff" />
      <path d="M1 20l5-1 5 1-3 3H3z" fill="#ffd21a" />
      <path d="M12 6h11M12 10h9M13 14l10-9" stroke="#4a70c8" strokeWidth="1.500" />
      <path d="M12 8l9 13" stroke="#111" strokeWidth="3" />
      <path d="M12 3l1 3 3 1-3 1-1 3-1-3-3-1 3-1z" fill="#fff" />
    </>
  ),
  tools: (
    <>
      <path d="M8 4q7-4 12 1l-1 2-5-1-3 9-2-1 2-8z" fill="#6c7e7a" stroke="#333" strokeWidth=".8" />
      <path d="M2 13h3l1 2 5 1 3-2 2 2-2 3-4 1-1 3-4-1z" fill="#a8acc0" stroke="#444" strokeWidth=".8" />
      <circle cx="5" cy="20" r="3" fill="#f59a20" />
      <circle cx="12" cy="20" r="2" fill="#4a60c0" />
    </>
  ),
  roles: (
    <>
      <path d="M1 5l5-3v18l-5 2z" fill="#f4f4f4" stroke="#555" />
      <path d="M8 3h14v16H8z" fill="#fff" stroke="#222" />
      <path d="M10 5h10v11H10z" fill="#dd2a1a" />
      <path d="M12 5h6v5l-3 3-3-3z" fill="#5a9af0" />
      <path d="M12 16h6l-3-3z" fill="#ffa030" />
    </>
  ),
};

const Icon = ({ name, set = art, box = 24, className = 'size-6' }: { name: string; set?: Art; box?: number; className?: string }) => (
  <svg viewBox={`0 0 ${box} ${box}`} className={clsx('shrink-0', className)} aria-hidden="true">
    {set[name]}
  </svg>
);

const Small = ({ name, className = 'size-4' }: { name: string; className?: string }) => (
  <Icon name={name} set={smallArt} box={16} className={className} />
);

/* Latin runs inside song-style text, half as wide as an ideograph */
const Latin = ({ children, large }: { children: React.ReactNode; large?: boolean }) => (
  <span className={clsx("font-['DejaVu_Sans_Mono',monospace] whitespace-pre", large ? 'text-[11px]' : 'text-[10px]')}>{children}</span>
);

/* ---------- toolbars ---------- */

const Handle = () => (
  <span className="flex w-2 shrink-0 justify-center">
    <span className="h-[22px] border-l-2 border-dotted border-white/90" />
  </span>
);

const DropArrow = ({ low }: { low?: boolean }) => (
  <button aria-label="更多" className={clsx('flex h-6 w-3 shrink-0 justify-center', low ? 'items-end pb-1' : 'items-center')}>
    <span className="h-0 w-0 border-x-3 border-t-3 border-x-transparent border-t-black" />
  </button>
);

const Separator = () => (
  <span className="flex w-[6px] shrink-0 justify-center">
    <span className="h-[28px] w-[2px] border-l border-[#bdbdbd] bg-[#f6f6f6]" />
  </span>
);

const Tools = ({ items }: { items: string }) => (
  <>
    {items.split(' ').map((it, i) => {
      if (it === 'v') return <DropArrow key={i} />;
      if (it === '_') return <DropArrow key={i} low />;
      if (it === '|') return <Separator key={i} />;
      return (
        <button key={i} aria-label={it} className="flex h-7 w-[31px] shrink-0 items-center justify-center hover:bg-white/40">
          <Icon name={it} />
        </button>
      );
    })}
  </>
);

const Panel = ({ children, className }: { children: React.ReactNode; className?: string }) => (
  <div className={clsx('flex h-full shrink-0 items-center border-r border-[#b4b4b4] bg-linear-to-b from-[#dadada] to-[#cccccc]', className)}>
    {children}
  </div>
);

const SmallTools = ({ items }: { items: string }) => (
  <>
    {items.split(' ').map((it, i) => {
      if (it === 'v') return <DropArrow key={i} />;
      if (it === '|') return <Separator key={i} />;
      return (
        <button key={i} aria-label={it} className="flex h-6 w-[23px] shrink-0 items-center justify-center hover:bg-white/40">
          <Small name={it} />
        </button>
      );
    })}
  </>
);

const Combo = ({ label, options, className }: { label: string; options: string[]; className: string }) => (
  <span className={clsx('relative flex h-[17px] shrink-0', className)}>
    <select aria-label={label} className="h-full w-full appearance-none rounded-xs border border-[#6d6d6d] bg-white text-xs leading-none text-black">
      {options.map((o) => (
        <option key={o}>{o}</option>
      ))}
    </select>
    <span className="pointer-events-none absolute top-px right-px flex h-[15px] w-4 items-center justify-center border border-[#2c66b0] bg-linear-to-b from-[#e8f4ff] to-[#6ab0f0]">
      <span className="h-0 w-0 border-x-5 border-t-7 border-x-transparent border-t-[#111]" />
    </span>
  </span>
);

const menus: [string, string][] = [
  ['文件', 'F'], ['编辑', 'E'], ['视图', 'V'], ['插入', 'S'], ['格式', 'R'], ['工具', 'T'], ['装配', 'A'],
  ['信息', 'I'], ['分析', 'L'], ['首选项', 'P'], ['窗口', 'O'], ['GC工具箱', ''], ['帮助', 'H'],
];

const TitleBar = () => (
  <header className="border-t-3 border-b border-t-[#55585d] border-b-black bg-[#1c1c1c]">
    <div className="flex h-[22px] items-center pl-[2px]">
      <Icon name="logo" className="size-[18px]" />
      <h1 className="ml-[3px] flex-1 font-['Noto_Sans','Noto_Sans_CJK_SC',sans-serif] text-[13px] text-[#7a7a7a]">
        NX 10 - 建模 - [_model1.prt （修改的） ]
      </h1>
      <span className="mr-6 font-['DejaVu_Sans',sans-serif] text-xs font-bold text-white">SIEMENS</span>
      <div className="flex gap-[3px] pr-[3px]">
        {['M4 13h6v2H4z', 'M7 4h8v7h-3v4H4V8h3zM8 6h6v4h-2V8H8zM5 10v4h6v-4z', 'M4 4l10 10M14 4L4 14'].map((d, i) => (
          <button key={i} aria-label={['最小化', '还原', '关闭'][i]} className="flex h-[18px] w-[19px] items-center justify-center rounded-xs bg-linear-to-b from-[#5c5c5c] to-[#2a2a2a]">
            <svg viewBox="0 0 18 18" className="size-[18px]">
              <path d={d} fill={i === 2 ? 'none' : '#fff'} fillRule="evenodd" stroke={i === 2 ? '#fff' : 'none'} strokeWidth="2" />
            </svg>
          </button>
        ))}
      </div>
    </div>
  </header>
);

const MenuBar = () => (
  <nav className="flex h-[23px] items-center border-b border-[#b0b0b0] bg-linear-to-b from-[#e9e9e9] to-[#dedede] pl-px">
    <span className="flex w-2 justify-center">
      <span className="h-4 border-l-2 border-dotted border-[#bbb]" />
    </span>
    <svg viewBox="0 0 16 16" className="size-[14px]" aria-hidden="true">
      <path d="M1 4l4-3 4 1v6l3-1 3 2v3l-6 3-8-2z" fill="#2a74dc" stroke="#0f4fb0" />
      <path d="M2 4l3 1v6l4 1 5-3M5 5l4-3" fill="none" stroke="#cfe2ff" />
    </svg>
    <ul className="ml-[7px] flex flex-1 gap-[13px] text-xs text-black">
      {menus.map(([text, key]) => (
        <li key={text} className={clsx(text === '首选项' && 'ml-3')}>
          <button className="flex items-center whitespace-nowrap">
            {text.startsWith('GC') ? <><Latin>GC</Latin>{text.slice(2)}</> : text}
            {key && <Latin>(<u>{key}</u>)</Latin>}
          </button>
        </li>
      ))}
    </ul>
    <div className="flex gap-[3px] pr-[6px]">
      {['M4 11h6v2H4z', 'M6 3h7v6h-3v4H3V7h3zM7 5v2h3v1h2V5zM4 9v3h5V9z', 'M4 4l7 7M11 4l-7 7'].map((d, i) => (
        <button key={i} aria-label={['最小化窗口', '还原窗口', '关闭窗口'][i]} className="flex size-4 items-center justify-center rounded-[3px] border border-[#8c8c8c] bg-[#f4f4f4]">
          <svg viewBox="0 0 16 16" className="size-[14px]">
            <path d={d} fill={i === 2 ? 'none' : '#666'} fillRule="evenodd" stroke={i === 2 ? '#555' : 'none'} strokeWidth="2.500" />
          </svg>
        </button>
      ))}
    </div>
  </nav>
);

const StandardBar = () => (
  <div className="flex h-[34px] border-b border-[#b4b4b4] bg-[#d9d9d9] pl-[6px]">
    <Panel className="border-l border-l-white">
      <Handle />
      <button className="flex w-[54px] shrink-0 items-center pl-[2px] text-xs whitespace-nowrap">
        <Icon name="logo" />
        <span className="ml-[3px]">启动</span>
      </button>
      <Tools items="v new open save | cut copy paste | undo v redo | delete v | info |" />
      <label className="ml-[2px] flex h-[22px] w-[110px] items-center border border-[#9a9a9a] bg-white pr-1">
        <input aria-label="查找命令" placeholder="查找命令" className="w-full min-w-0 pl-px text-xs outline-none placeholder:text-[#8a8a8a]" />
        <svg viewBox="0 0 16 16" className="size-4 shrink-0" fill="none" stroke="#444">
          <circle cx="10" cy="6" r="4.500" strokeWidth="1.400" />
          <path d="M8 4q2-2 4 0" />
          <path d="M7 10l-5 5" strokeWidth="2.400" />
        </svg>
      </label>
      <Tools items="_" />
    </Panel>
    <Panel className="pl-[3px]">
      <Handle />
      <Tools items="fit v hinge v shaded v section clip v background v | face faceCmp _" />
    </Panel>
    <Panel className="pl-px">
      <Handle />
      <Tools items="layers csys v | edit palette | showHide v | measure v ruler _" />
    </Panel>
  </div>
);

const FeatureBar = () => (
  <div className="flex h-[34px] border-b-2 border-[#9b9b9b] bg-[#d0d0d0]">
    <Panel className="pt-[2px]">
      <Handle />
      <Tools items="plane v extrude revolve hole emboss offset pocket | thicken bosses pattern mirror unite v shell trim split sew wrap | blend faceBlend chamfer draft sphere _" />
    </Panel>
    <Panel className="pt-[2px]">
      <Handle />
      <Tools items="moveFace v resizeFace v deleteFace copyFace v coplanar v linear v group shellFace moveEdge v _" />
    </Panel>
    <Panel className="pt-[2px]">
      <Handle />
      <Tools items="loft mesh studio sweep section2 nsided drape v _" />
    </Panel>
  </div>
);

const SelectionBar = () => (
  <div className="flex h-7 items-center border-b border-[#a8a8a8] bg-linear-to-b from-[#cbcbcb] to-[#dadada] pl-[5px]">
    <Combo label="类型过滤器" options={['点', '曲线', '面']} className="mr-2 w-[114px]" />
    <Combo label="选择范围" options={['整个装配', '仅在工作部件内']} className="mr-1 w-[120px]" />
    <SmallTools items="interpart | filterReset filterOn v" />
    <span className="-ml-1 flex items-center">
      <SmallTools items="crossUndo hammer | marquee v |" />
    </span>
    <span className="-ml-1 flex items-center">
      <SmallTools items="seed cubeSel | snap endpoint midpoint control pole intersect center quadrant existing onCurve onFace | gridSnap" />
    </span>
    <span className="flex-1" />
    <span className="pr-[3px]"><DropArrow low /></span>
  </div>
);

/* ---------- left side ---------- */

const railGroups = [
  ['assembly', 'constraint', 'part', 'library'],
  ['hd3d'],
  ['web'],
  ['clock', 'materials', 'wizard', 'tools', 'roles'],
];

const ResourceBar = () => {
  const [active, setActive] = useState('part');
  return (
    <aside className="flex w-[31px] shrink-0 flex-col bg-linear-to-r from-[#acacac] via-[#a6a6a6] via-80% to-[#7e7e7e]">
      <button aria-label="资源条选项" className="flex h-[31px] items-center justify-center">
        <svg viewBox="0 0 16 16" className="size-4" fill="none" stroke="#222">
          <circle cx="8" cy="8" r="4.500" strokeWidth="1.600" />
          <path d="M8 1v2M8 13v2M1 8h2M13 8h2M3 3l1.500 1.500M11.500 11.500L13 13M13 3l-1.500 1.500M3 13l1.500-1.500" strokeWidth="1.800" />
          <circle cx="8" cy="8" r="1" fill="#222" stroke="none" />
        </svg>
      </button>
      <div className="flex flex-col gap-[14px] pt-[14px]">
        {railGroups.map((group) => (
          <div key={group[0]} className="flex flex-col items-end gap-[2px]">
            {group.map((name) => (
              <button
                key={name}
                aria-label={name}
                onClick={() => setActive(name)}
                className={clsx(
                  'flex h-10 items-center rounded-l-md border border-r-0 border-[#666] pl-[2px]',
                  name === active ? 'w-7 bg-[#ebebeb]' : 'w-[27px] bg-linear-to-br from-[#ededed] to-[#c6c6c6]',
                )}
              >
                <Icon name={name} set={railArt} className="size-[23px]" />
              </button>
            ))}
          </div>
        ))}
      </div>
    </aside>
  );
};

interface Feature {
  icon: string;
  name: string;
  tail?: string;
  child?: boolean;
  box?: '+' | '-';
  tick?: boolean;
  dimmed?: boolean;
  bold?: boolean;
}

const features: Feature[] = [
  { icon: 'history', name: '历史记录模式' },
  { icon: 'view', name: '模型视图', box: '+' },
  { icon: 'camera', name: '摄像机', box: '+', tick: true },
  { icon: 'expression', name: '用户表达式' },
  { icon: 'folder', name: '模型历史记录', box: '-' },
  { icon: 'datum', name: '基准坐标系', tail: ' (0)', child: true },
  { icon: 'sketch', name: '草图', tail: ' (1) “SKETCH_...', child: true },
  { icon: 'loft', name: '通过曲线组', tail: ' (2) “...', child: true },
  { icon: 'sketch', name: '草图', tail: ' (3) “SKETCH_...', child: true },
  { icon: 'point', name: '点', tail: ' (4)', child: true },
  { icon: 'loft', name: '通过曲线组', tail: ' (5)', child: true },
  { icon: 'arc', name: '圆弧', tail: ' (6)', child: true },
  { icon: 'point', name: '点', tail: ' (7)', child: true },
  { icon: 'sketch', name: '草图', tail: ' (9) “SKETCH_...', child: true, dimmed: true },
  { icon: 'extrude', name: '拉伸', tail: ' (10)', child: true },
  { icon: 'split', name: '拆分体', tail: ' (11)', child: true },
  { icon: 'revolve', name: '旋转', tail: ' (12)', child: true },
  { icon: 'revolve', name: '旋转', tail: ' (14)', child: true, bold: true },
];

const Branch = ({ row, first, last }: { row: Feature; first: boolean; last: boolean }) => {
  if (row.child) {
    return (
      <svg className="h-5 w-10 shrink-0" viewBox="0 0 40 20" stroke="#999" strokeDasharray="1 1" aria-hidden="true">
        <path d={last ? 'M28.500 0v10.500h10' : 'M28.500 0v20M28.500 10.500h10'} fill="none" />
      </svg>
    );
  }
  const line = first ? 'M9.500 20v-9.500h9' : row.box === '-' ? 'M9.500 0v10.500h9' : 'M9.500 0v20M9.500 10.500h9';
  return (
    <svg className="h-5 w-[19px] shrink-0" viewBox="0 0 19 20" fill="none" aria-hidden="true">
      <path d={line} stroke="#999" strokeDasharray="1 1" />
      {row.box && (
        <>
          <rect x="5.500" y="5.500" width="8" height="8" rx="1" fill="#fff" stroke="#777" />
          <path d={row.box === '+' ? 'M7 9.500h5M9.500 7v5' : 'M7 9.500h5'} stroke="#111" />
        </>
      )}
    </svg>
  );
};

const cellRight = 'border-r border-b border-[#e2e2e2] p-0';

const FeatureRow = ({ row, index, last }: { row?: Feature; index: number; last: boolean }) => (
  <tr className={clsx('h-5', index % 2 ? 'bg-[#f6f6f6]' : 'bg-white')}>
    <td className={cellRight}>
      {row && (
        <div className="flex h-[19px] items-center overflow-hidden whitespace-nowrap">
          <Branch row={row} first={index === 0} last={last} />
          {row.child ? (
            <label className={clsx('flex items-center', row.dimmed ? 'text-[#9a9a9a]' : 'text-[#222]', row.bold && 'text-[13px] font-bold')}>
              <span className="relative flex">
                <input type="checkbox" defaultChecked className="peer size-[13px] appearance-none border border-black bg-white" />
                <svg viewBox="0 0 16 16" className="pointer-events-none invisible absolute inset-0 size-[13px] peer-checked:visible">
                  {smallArt.tick}
                </svg>
              </span>
              <span className="mx-[2px] flex w-[15px]"><Small name={row.icon} className="size-[15px]" /></span>
              {row.name}
              <Latin large={row.bold}>{row.tail}</Latin>
            </label>
          ) : (
            <span className="flex items-center gap-[2px] text-[#222]">
              {row.tick && <Small name="tick" className="size-[14px]" />}
              <Small name={row.icon} />
              {row.name}
            </span>
          )}
        </div>
      )}
    </td>
    <td className={cellRight}>{row?.child && <span className="flex pl-[5px]"><Small name="tick" className="size-[14px]" /></span>}</td>
    <td className="border-b border-[#e2e2e2] p-0" />
  </tr>
);

const Navigator = () => (
  <section className="flex w-[327px] shrink-0 flex-col border-t border-r-2 border-l-2 border-[#8c8c8c] border-l-white bg-[#ebebeb] pr-2 pb-[6px] pl-[5px] text-xs">
    <div className="flex h-[29px] shrink-0 items-center justify-between pr-1 pl-1">
      <h2 className="text-[13px] font-bold text-[#111]">部件导航器</h2>
      <button aria-label="固定" className="h-3 w-[13px] border border-t-2 border-black" />
    </div>
    <div className="flex min-h-0 flex-1 flex-col border border-[#666] pt-px">
      <div className="min-h-0 flex-1 overflow-hidden">
        <table className="w-full table-fixed border-separate border-spacing-0">
          <thead>
            <tr className="h-4 bg-linear-to-b from-[#fafafa] to-[#cfd3d4] text-left leading-4">
              <th className="w-[201px] border-r border-b border-r-[#aaa] border-b-[#888] p-0 pl-[6px] font-normal">
                <span className="flex items-center gap-[15px]">
                  名称
                  <span className="h-0 w-0 border-x-5 border-b-6 border-x-transparent border-b-black" />
                </span>
              </th>
              <th className="w-[100px] border-r border-b border-r-[#aaa] border-b-[#888] p-0 pl-[5px] font-normal">最新</th>
              <th className="border-b border-[#888] p-0" />
            </tr>
          </thead>
          <tbody>
            {features.map((row, i) => (
              <FeatureRow key={i} row={row} index={i} last={i === features.length - 1} />
            ))}
            {[18, 19, 20].map((i) => (
              <FeatureRow key={i} index={i} last={false} />
            ))}
          </tbody>
        </table>
      </div>
      <div className="flex h-[17px] shrink-0 items-center bg-[#f0f0f0] pr-[5px] pl-[6px]">
        <span className="h-0 w-0 border-y-4 border-r-4 border-y-transparent border-r-[#333]" />
        <span className="ml-[9px] flex h-[15px] w-[206px] items-center justify-center gap-[2px] rounded-xs border border-[#8f8f8f] bg-linear-to-b from-[#f4f4f4] to-[#c6c8ca]">
          <span className="h-[7px] w-px bg-[#555]" />
          <span className="h-[7px] w-px bg-[#555]" />
          <span className="h-[7px] w-px bg-[#555]" />
        </span>
        <span className="ml-auto h-0 w-0 border-y-4 border-l-4 border-y-transparent border-l-[#333]" />
      </div>
    </div>
    <div className="flex h-3 shrink-0 items-center gap-1">
      <span className="h-px flex-1 bg-[#aaa]" />
      <span className="h-[6px] w-[54px] border-r border-b border-[#888] bg-[#d4d4d4]" />
      <span className="h-px flex-1 bg-[#aaa]" />
    </div>
    {['相依性', '细节', '预览'].map((title) => (
      <button key={title} className="flex h-[23px] shrink-0 items-center border-r border-b border-[#999] bg-linear-to-b from-[#f8f8f8] from-50% to-[#d6d8d9] pl-[6px] text-left font-bold text-[#111]">
        <span className="flex-1 text-[13px] leading-[22px]">{title}</span>
        <span className="flex h-full w-[23px] items-center justify-center border-l border-[#aaa]">
          <svg viewBox="0 0 12 10" className="h-[10px] w-3"><path d="M0 0h3l3 5 3-5h3L7 10H5z" fill="#666" /></svg>
        </span>
      </button>
    ))}
  </section>
);

/* ---------- graphics window ---------- */

const coneStops = [[0, 184], [25, 194], [45, 203], [57, 210], [75, 204], [95, 203], [120, 199], [140, 188], [160, 176], [180, 172], [215, 168], [325, 168], [360, 184]];

const coneColor = (deg: number) => {
  const i = coneStops.findIndex(([a]) => a >= deg);
  if (i <= 0) return 'rgb(255,184,0)';
  const [a0, g0] = coneStops[i - 1];
  const [a1, g1] = coneStops[i];
  return `rgb(255,${Math.round(g0 + ((g1 - g0) * (deg - a0)) / (a1 - a0))},2)`;
};

const ring = (cx: number, cy: number, rx: number, ry: number, n: number) =>
  Array.from({ length: n }, (_, i) => {
    const t = (i / n) * Math.PI * 2;
    return [cx + rx * Math.cos(t), cy + ry * Math.sin(t)];
  });

const poly = (pts: number[][]) => pts.map((p) => p.map((v) => v.toFixed(1)).join(',')).join(' ');

const apex = [1155, 313];
const coneRing = ring(1154, 385, 188, 90, 180);

const rim =
  'M596 315C596 290 635 276 675 276C705 276 728 283 744 295L888 407C896 413 900 420 900 429C900 450 862 465 820 465C795 465 775 461 760 453L608 337C600 331 596 324 596 315Z';

const Viewport = () => (
  <main className="min-w-0 flex-1 overflow-hidden bg-linear-to-b from-[#b4b5b7] via-[#dedfe1] via-62% to-[#eaebed]">
    <svg viewBox="358 145 1008 561" preserveAspectRatio="xMinYMin slice" className="h-full w-full" role="img" aria-label="模型">
      <defs>
        <radialGradient id="domeIn" gradientUnits="userSpaceOnUse" cx="655" cy="350" r="104">
          <stop offset="0" stopColor="#ffff20" />
          <stop offset="0.4" stopColor="#fbf900" />
          <stop offset="0.7" stopColor="#d6d300" />
          <stop offset="1" stopColor="#a4a100" />
        </radialGradient>
        <linearGradient id="wallIn" gradientUnits="userSpaceOnUse" x1="816" y1="351" x2="764" y2="418">
          <stop offset="0" stopColor="#b3af00" />
          <stop offset="0.4" stopColor="#c6c200" />
          <stop offset="0.7" stopColor="#eeeb00" />
          <stop offset="0.9" stopColor="#ffff00" />
        </linearGradient>
        <linearGradient id="wallOut" gradientUnits="userSpaceOnUse" x1="686" y1="396" x2="660" y2="430">
          <stop offset="0" stopColor="#bcb900" />
          <stop offset="0.5" stopColor="#989600" />
          <stop offset="1" stopColor="#747200" />
        </linearGradient>
        <linearGradient id="domeOut" gradientUnits="userSpaceOnUse" x1="880" y1="440" x2="815" y2="506">
          <stop offset="0" stopColor="#d8d500" />
          <stop offset="0.5" stopColor="#9a9800" />
          <stop offset="1" stopColor="#6a6800" />
        </linearGradient>
      </defs>

      <polygon points={poly(ring(576, 544, 187, 90, 44))} fill="#ffff00" stroke="#3d5cf8" strokeWidth="1.800" />

      <path d="M596 315C597 345 610 368 630 380L768 486L775 450L608 337Z" fill="url(#wallOut)" />
      <path d="M752 447C752 465 757 476 765 484C780 499 800 506 822 506C862 506 896 478 900 429L860 458L790 460Z" fill="url(#domeOut)" />
      <path d={rim} fill="url(#wallIn)" />
      <path d="M744 295C745 335 715 375 675 387L608 337C600 331 596 324 596 315C596 290 635 276 675 276C705 276 728 283 744 295Z" fill="url(#domeIn)" />
      <path d="M888 407C896 413 900 420 900 429C900 440 889 449 873 456C880 446 888 428 888 407Z" fill="#cfcc00" />
      <g fill="none" stroke="#33330a" strokeWidth="1">
        <path d={rim} />
        <path d="M744 295C745 335 715 375 675 387" />
        <path d="M888 407C888 428 880 446 873 456" />
        <path d="M608 337C609 354 618 370 630 380" />
        <path d="M752 447C752 465 757 476 765 484" />
        <path d="M674 387L752 449L764 455" />
      </g>

      <g>
        {coneRing.map((p, i) => {
          const q = coneRing[(i + 1) % coneRing.length];
          const deg = (Math.atan2((p[1] + q[1]) / 2 - apex[1], (p[0] + q[0]) / 2 - apex[0]) * 180) / Math.PI;
          const color = coneColor((deg + 360) % 360);
          return <polygon key={i} points={poly([apex, p, q])} fill={color} stroke={color} strokeWidth="1" />;
        })}
      </g>
      <polygon points={poly(ring(1154, 385, 189, 91, 44))} fill="none" stroke="#3d5cf8" strokeWidth="1.800" />
      <path d="M1154.500 310v8M1152 313.500h5" stroke="#00ff20" />

      <g fill="none" stroke="#1a1ac4">
        <path d="M575.500 544V440M576 544L677 514M576 544L514 496M540.500 516V457.500L576 485L632.500 468.500V527M540.500 516L597 500L632.500 527M572 544.500h8M579.500 538v6" />
      </g>
      <g fill="#0505b4">
        <path d="M576 428l3 13h-6zM687 511l-14 0 3 6zM505 489l6 9 5-5z" />
      </g>
      <g fill="#2a3cf0" fontFamily="Liberation Sans" fontSize="12" textAnchor="middle">
        <text x="576" y="426">Z</text>
        <text x="501" y="490">Y</text>
        <text x="694" y="514">X</text>
      </g>

      <path d="M396 628l17-4 10 8v17l-17 5-10-9zM396 628l10 8 17-4M406 636v17M413 624v17l10 8M396 645l17-4" fill="#c8c8c8" fillOpacity=".6" stroke="#a8a8a8" />
      <path d="M406.500 653V632M406.500 626l2 8h-4z" stroke="#0a2ac0" fill="#0a2ac0" strokeWidth="1.500" />
      <path d="M408 653l18-5M434 646l-9 0 2 4z" stroke="#d83030" fill="#d83030" />
      <path d="M404 652l-10-7M389 641l4 6 3-3z" stroke="#1a8a2a" fill="#1a8a2a" />
      <circle cx="406" cy="655" r="4" fill="#b8b8b8" stroke="#8a8a8a" strokeWidth=".6" />
      <g fontFamily="Liberation Sans" fontSize="12" textAnchor="middle">
        <text x="407" y="626" fill="#2a3cf0">Z</text>
        <text x="438" y="650" fill="#e03030">X</text>
        <text x="386" y="643" fill="#1a9a2a">Y</text>
      </g>
    </svg>
  </main>
);

/* ---------- bottom ---------- */

const StatusBar = () => (
  <footer className="flex h-[22px] items-center border-b border-[#222] bg-[#d8d8d8] text-[13px] font-bold text-black">
    <p className="flex-1 pl-[2px] whitespace-nowrap">
      选择对象并使用<Latin large> MB3</Latin>，或者双击某一对象
    </p>
    <div className="flex h-full w-[740px] items-center justify-end border-l border-[#f4f4f4]">
      <span className="h-full w-5 border-l-2 border-[#f4f4f4]" />
      <span className="flex h-full w-[77px] items-center gap-1 border-x-2 border-[#f4f4f4] pl-[2px]">
        <svg viewBox="0 0 16 16" className="size-4"><path d="M0 0h16v16H0z" fill="#7f9cab" /><path d="M3 3l5 2 5-2v7l-5 2-5-3zM6 11l2 4" fill="#6a7276" stroke="#555" /></svg>
        <svg viewBox="0 0 16 16" className="ml-px size-4"><path d="M0 0h16v16H0z" fill="#fff" /><path d="M1 4V1h3M12 1h3v3M15 12v3h-3M4 15H1v-3" fill="none" stroke="#444" /><path d="M4 4h8v8H4z" fill="#5a9af0" stroke="#111" /></svg>
      </span>
      <span className="w-[17px]" />
    </div>
  </footer>
);

const Taskbar = () => (
  <div className="flex h-2 items-end gap-[6px] overflow-hidden bg-linear-to-r from-[#7d92ac] via-[#a7bfdf] via-20% to-[#7f95b2]">
    <svg viewBox="0 0 60 8" className="h-2 w-[54px]"><ellipse cx="28" cy="16" rx="16" ry="14" fill="#4a7aa4" stroke="#cfe6f6" /></svg>
    <svg viewBox="0 0 54 8" className="h-2 w-[54px]"><path d="M0 8V1h54v7" fill="#d5e2f0" stroke="#4a5a70" /><path d="M20 8q8-6 18-5" stroke="#f5c21a" strokeWidth="3" fill="none" /><path d="M22 8q4-3 8-2" stroke="#2a8ad8" strokeWidth="2" fill="none" /></svg>
    <svg viewBox="0 0 58 8" className="h-2 w-[58px]"><path d="M0 8V1h58v7" fill="#e3ebf5" stroke="#4a5a70" /><path d="M16 8l2-4 12-1-2 5z" fill="#d8203a" /></svg>
    <svg viewBox="0 0 58 8" className="h-2 w-[58px]"><path d="M0 8V1h52v7M56 8V1" fill="#bcd0e6" stroke="#4a5a70" /><path d="M11 8V5h6v2h18V5h6v3" fill="#3a8ac4" stroke="#28628c" /></svg>
  </div>
);

const Watermark = () => (
  <div className="pointer-events-none absolute right-1 bottom-1 flex items-center">
    <svg viewBox="40 36 264 298" className="h-[99px] w-22 shrink-0" aria-hidden="true">
      <path d="M172 42l124 70v146l-124 70-124-70V112z" fill="#6b9dd3" stroke="#fff" strokeWidth="9" />
      <path d="M213 66Q240 100 238 145L240 220L172 260L107 225Q102 260 112 294L172 328L296 258V112Z" fill="#6fc4ec" />
      <g fill="none" stroke="#cfe6f6" strokeWidth="3">
        <path d="M84 92Q140 85 172 108M213 66Q240 100 238 145M296 155Q280 200 240 218M260 278Q210 290 172 258M112 294Q100 260 107 225M50 215Q65 165 106 145" />
      </g>
      <path d="M172 112l64 36v72l-64 37-63-37v-72z" fill="#6b9dd3" stroke="#fff" strokeWidth="12" />
      <path d="M172 185l55-31v62l-55 32z" fill="#6fc4ec" />
      <path d="M118 154l54 31 55-31M172 185v63" fill="none" stroke="#dbeaf7" strokeWidth="3" />
    </svg>
    <div className="flex w-[211px] flex-col pl-2 font-bold whitespace-nowrap text-[#6fc4ec] [-webkit-text-stroke:4px_#fff] [paint-order:stroke_fill]">
      <span className="text-[46px] leading-[46px]">3D世界网</span>
      <span className="font-['DejaVu_Sans',sans-serif] text-[18px] leading-[18px]">WWW.3DSJW.COM</span>
    </div>
  </div>
);

export default function App() {
  return (
    <div className="relative flex h-screen flex-col overflow-hidden bg-[#d8d8d8] font-['Noto_Sans_CJK_SC',sans-serif] text-xs">
      <Gradients />
      <TitleBar />
      <MenuBar />
      <StandardBar />
      <FeatureBar />
      <SelectionBar />
      <div className="flex min-h-0 flex-1">
        <ResourceBar />
        <Navigator />
        <Viewport />
      </div>
      <StatusBar />
      <Taskbar />
      <Watermark />
    </div>
  );
}
